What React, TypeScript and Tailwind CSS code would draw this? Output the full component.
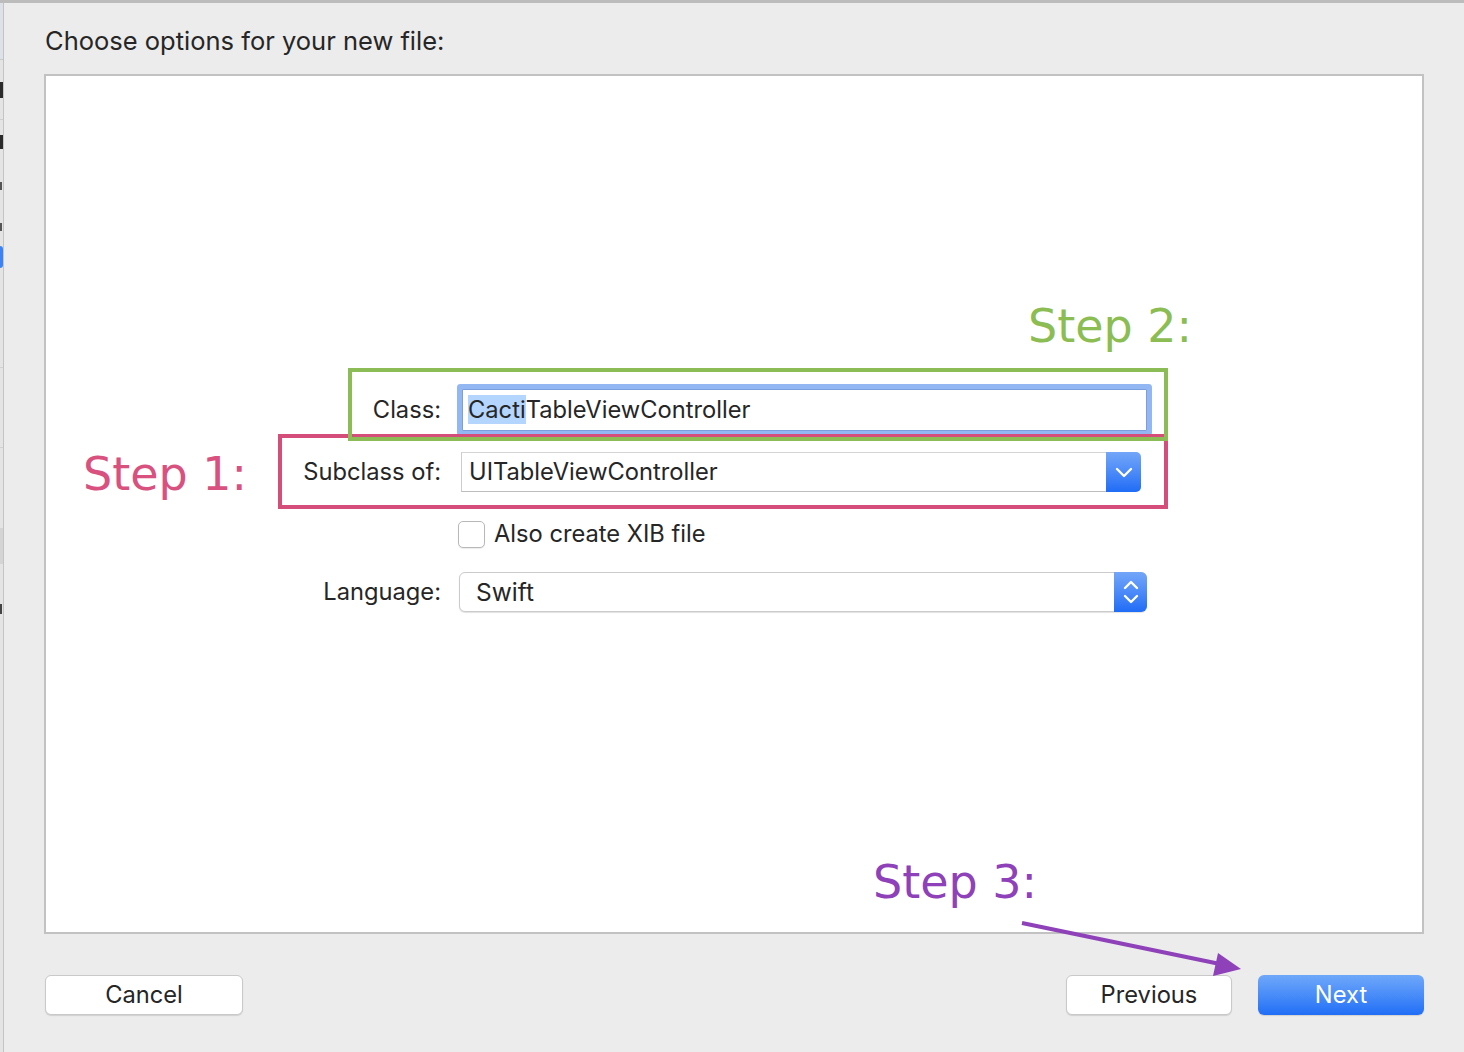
import React from 'react';

const ui = "font-['Inter','Liberation_Sans',sans-serif]";
const step = "font-['DejaVu_Sans','Verdana',sans-serif]";

// sliver of the window behind the sheet
function LeftStrip() {
  return (
    <div className="w-[4px] shrink-0 border-r border-[#c4c4c4] bg-[#e4e4e4] flex flex-col overflow-hidden">
      <div className="h-[57px] shrink-0 bg-[#dde2e8] border-b border-[#c9c9c9]" />
      <div className="h-[60px] shrink-0 flex items-center border-b border-[#cfcfcf]">
        <div className="w-[3px] h-[16px] bg-[#2a2a2a]" />
      </div>
      <div className="h-[44px] shrink-0 flex items-center">
        <div className="w-[3px] h-[14px] bg-[#2a2a2a]" />
      </div>
      <div className="h-[44px] shrink-0 flex items-center">
        <div className="w-[2px] h-[8px] bg-[#555]" />
      </div>
      <div className="h-[38px] shrink-0 flex items-center">
        <div className="w-[2px] h-[8px] bg-[#555]" />
      </div>
      <div className="h-[22px] w-[3px] shrink-0 rounded-r-full bg-[#3b82f6]" />
      <div className="h-[100px] shrink-0 border-b border-[#d2d2d2]" />
      <div className="h-[80px] shrink-0 border-b border-[#d2d2d2]" />
      <div className="h-[80px] shrink-0" />
      <div className="h-[36px] shrink-0 bg-[#d4d4d4]" />
      <div className="h-[90px] shrink-0 flex items-center">
        <div className="w-[2px] h-[10px] bg-[#444]" />
      </div>
    </div>
  );
}

function Chevron({ up, w = 16, h = 10 }: { up?: boolean; w?: number; h?: number }) {
  const d = up
    ? `M2 ${h - 2} L${w / 2} 2 L${w - 2} ${h - 2}`
    : `M2 2 L${w / 2} ${h - 2} L${w - 2} 2`;
  return (
    <svg width={w} height={h} viewBox={`0 0 ${w} ${h}`} fill="none">
      <path d={d} stroke="white" strokeWidth="2.4" strokeLinecap="round" strokeLinejoin="round" />
    </svg>
  );
}

export default function App() {
  return (
    <div className={`relative w-[1464px] h-[1052px] overflow-hidden bg-[#ececec] flex flex-col ${ui} text-[#262626]`}>
      <div className="h-[3px] shrink-0 bg-[#bcbcbc]" />
      <div className="flex flex-1">
        <LeftStrip />
        <main className="flex-1 flex flex-col pl-[40px] pr-[40px]">
          <h1 className="pt-[23px] pl-[1px] h-[53px] text-[25.5px] leading-[30px] font-normal text-[#262626]">
            Choose options for your new file:
          </h1>

          <section className="mt-[18px] h-[860px] border-2 border-[#c2c2c2] bg-white flex flex-col pt-[313px] text-[23.7px]">
            {/* Class */}
            <div className="flex items-center h-[42px]">
              <label className="w-[395px] text-right">Class:</label>
              <div className="ml-[21px] w-[685px] h-[42px] rounded-[1px] border border-[#7b9fdd] bg-white shadow-[0_0_0_5px_#93b7f3] flex items-center pl-[5px]">
                <span className="leading-[30px]">
                  <span className="bg-[#b4d5fe]">Cacti</span>TableViewController
                </span>
              </div>
            </div>

            {/* Subclass of */}
            <div className="flex items-center h-[40px] mt-[21px]">
              <label className="w-[395px] text-right">Subclass of:</label>
              <div className="ml-[20px] w-[680px] h-[40px] flex bg-white">
                <div className="flex-1 flex items-center pl-[7px] border-y border-l border-t-[#d4d4d4] border-b-[#bdbdbd] border-l-[#cccccc]">
                  UITableViewController
                </div>
                <div className="w-[35px] rounded-r-[5px] bg-gradient-to-b from-[#73a6f8] to-[#1f6cf6] flex items-center justify-center">
                  <Chevron w={18} h={11} />
                </div>
              </div>
            </div>

            {/* XIB */}
            <div className="flex items-center h-[40px] mt-[22px]">
              <div className="w-[395px]" />
              <div className="ml-[17px] w-[27px] h-[27px] rounded-[5px] border border-[#b8b8b8] bg-white shadow-[0_1px_1px_rgba(0,0,0,0.08)]" />
              <span className="ml-[9px]">Also create XIB file</span>
            </div>

            {/* Language */}
            <div className="flex items-center h-[40px] mt-[18px]">
              <label className="w-[395px] text-right">Language:</label>
              <div className="ml-[18px] w-[688px] h-[40px] flex rounded-[6px] bg-white border border-[#cbcbcb] shadow-[0_1px_1px_rgba(0,0,0,0.12)]">
                <div className="flex-1 flex items-center pl-[16px] text-[24.5px]">Swift</div>
                <div className="w-[33px] -my-[1px] -mr-[1px] rounded-r-[6px] bg-gradient-to-b from-[#73a6f8] to-[#1f6cf6] flex flex-col items-center justify-center gap-[4px]">
                  <Chevron up w={16} h={10} />
                  <Chevron w={16} h={10} />
                </div>
              </div>
            </div>
          </section>

          <footer className="mt-[41px] flex items-center justify-between text-[23.7px]">
            <button className="ml-[1px] w-[198px] h-[40px] rounded-[6px] bg-white border border-[#c9c9c9] shadow-[0_1px_1px_rgba(0,0,0,0.12)] text-[#262626]">
              Cancel
            </button>
            <div className="flex items-center gap-[26px]">
              <button className="w-[166px] h-[40px] rounded-[6px] bg-white border border-[#c9c9c9] shadow-[0_1px_1px_rgba(0,0,0,0.12)] text-[#262626]">
                Previous
              </button>
              <button className="w-[166px] h-[40px] rounded-[6px] bg-gradient-to-b from-[#6fa8fa] to-[#1f6ef6] text-white shadow-[0_1px_1px_rgba(0,0,0,0.12)]">
                Next
              </button>
            </div>
          </footer>
        </main>
      </div>

      {/* annotations drawn over the sheet */}
      <div className="absolute left-[278px] top-[434px] w-[890px] h-[75px] border-4 border-[#d54d7b]" />
      <div className="absolute left-[348px] top-[368px] w-[820px] h-[73px] border-4 border-[#8bbc55]" />
      <div className={`absolute left-[83px] top-[451px] text-[46px] leading-none text-[#d9517f] ${step}`}>Step 1:</div>
      <div className={`absolute left-[1028px] top-[303px] text-[46px] leading-none text-[#8bbd53] ${step}`}>Step 2:</div>
      <div className={`absolute left-[873px] top-[859px] text-[46px] leading-none text-[#8e41b8] ${step}`}>Step 3:</div>
      <svg className="absolute left-[1000px] top-[900px]" width="260" height="90" viewBox="0 0 260 90">
        <line x1="22" y1="23" x2="220" y2="64" stroke="#8e41b8" strokeWidth="4" />
        <polygon points="218,53 241,69 213,76" fill="#8e41b8" />
      </svg>
    </div>
  );
}
